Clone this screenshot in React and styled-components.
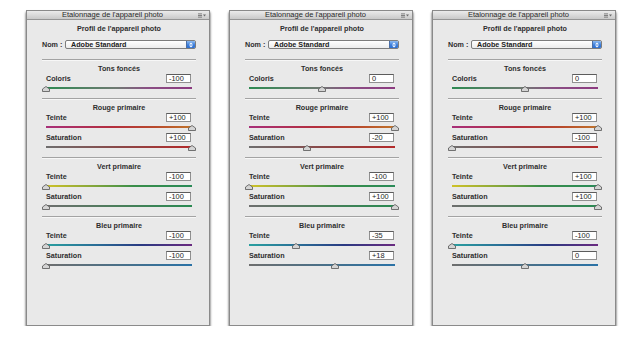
import React from "react";
import styled, { createGlobalStyle } from "styled-components";

const Global = createGlobalStyle`
  html, body { margin: 0; padding: 0; background: #ffffff; }
  body { font-family: "Liberation Sans", Arial, sans-serif; }
`;

const Page = styled.div`
  display: flex;
  gap: 19px;
  padding: 10px 0 0 26px;
`;

const Panel = styled.div`
  width: 184px;
  height: 316px;
  box-sizing: border-box;
  border: 1px solid #8a8a8a;
  background: #e9e9e9;
  box-shadow: 0 2px 2px rgba(0, 0, 0, 0.6), 0 3px 3px rgba(0, 0, 0, 0.25);
  display: flex;
  flex-direction: column;
`;

const TitleBar = styled.div`
  height: 8px;
  border-bottom: 1px solid #959595;
  background: linear-gradient(#ebebeb, #c9c9c9);
  display: flex;
  align-items: center;
`;

const Title = styled.div`
  flex: 1;
  text-align: center;
  font-size: 7.5px;
  line-height: 8px;
  color: #2a2a2a;
  white-space: nowrap;
`;

const MenuIcon = styled.svg`
  width: 8px;
  height: 5px;
  margin-right: 3px;
  flex: none;
`;

const Body = styled.div`
  padding: 4px 13px 0 15px;
  display: flex;
  flex-direction: column;
`;

const Heading = styled.div`
  height: 10px;
  line-height: 10px;
  text-align: center;
  font-size: 7.2px;
  font-weight: bold;
  color: #2e2e2e;
  white-space: nowrap;
  margin-top: ${(p) => (p.$first ? 0 : 3)}px;
`;

const ProfileRow = styled.div`
  display: flex;
  align-items: center;
  height: 9px;
  margin: 6px 0 6px 0;
`;

const NomLabel = styled.div`
  width: 23px;
  font-size: 7.2px;
  font-weight: bold;
  color: #2e2e2e;
  white-space: nowrap;
`;

const Select = styled.div`
  flex: 1;
  height: 9px;
  box-sizing: border-box;
  border: 1px solid #7d7d7d;
  border-radius: 2px;
  background: linear-gradient(#ffffff, #ececec);
  display: flex;
  align-items: center;
  overflow: hidden;
`;

const SelectText = styled.div`
  flex: 1;
  padding-left: 5px;
  font-size: 7.2px;
  font-weight: bold;
  line-height: 7px;
  color: #222;
`;

const Stepper = styled.div`
  width: 8px;
  height: 100%;
  background: linear-gradient(#8fbcf2, #3d7fdc 55%, #2e6fd0);
  border-left: 1px solid #4a6ea6;
  display: flex;
  align-items: center;
  justify-content: center;
`;

const Separator = styled.div`
  height: 1px;
  margin-top: 4px;
  background: #a3a3a3;
  border-bottom: 1px solid #f7f7f7;
`;

const Rows = styled.div`
  padding: 0 4px 0 4px;
  display: flex;
  flex-direction: column;
`;

const LabelRow = styled.div`
  height: 9px;
  display: flex;
  align-items: center;
  justify-content: space-between;
`;

const Label = styled.div`
  font-size: 7.2px;
  font-weight: bold;
  color: #2e2e2e;
`;

const ValueBox = styled.div`
  width: 25px;
  height: 9px;
  box-sizing: border-box;
  border: 1px solid #909090;
  border-top-color: #5c5c5c;
  background: #ffffff;
  font-size: 7.4px;
  line-height: 7px;
  padding-left: 2px;
  color: #1e1e1e;
  margin-right: 1px;
`;

const SliderArea = styled.div`
  position: relative;
  height: 11px;
`;

const Track = styled.div`
  position: absolute;
  left: 0;
  right: 0;
  top: 4px;
  height: 2px;
  background: ${(p) => p.$bg};
`;

const Thumb = styled.svg`
  position: absolute;
  top: 3px;
  width: 8px;
  height: 6px;
  margin-left: -4px;
`;

const gradients = {
  coloris: "linear-gradient(to right, #2e8a52, #6f7a72 48%, #8a4e84 70%, #8c3a80)",
  rougeT: "linear-gradient(to right, #a8307a, #b42e3e 45%, #b84a2c 75%, #c0742c)",
  rougeS: "linear-gradient(to right, #6e6e6e, #8a4848 50%, #b42a2a)",
  vertT: "linear-gradient(to right, #cfc228, #8aa83a 30%, #3a8e4a 60%, #2a8a58)",
  vertS: "linear-gradient(to right, #6e6e6e, #4a7e5a 50%, #2a8a52)",
  bleuT: "linear-gradient(to right, #2aa0a0, #2a6c96 35%, #2a3a82 65%, #6a2a80)",
  bleuS: "linear-gradient(to right, #6e6e6e, #4a7088 50%, #2a72a6)",
};

const fmt = (v) => (v > 0 ? `+${v}` : `${v}`);

function Slider({ label, value, bg }) {
  const pct = ((value + 100) / 200) * 100;
  return (
    <>
      <LabelRow>
        <Label>{label}</Label>
        <ValueBox>{fmt(value)}</ValueBox>
      </LabelRow>
      <SliderArea>
        <Track $bg={bg} />
        <Thumb viewBox="0 0 8 6" style={{ left: `${pct}%` }}>
          <polygon
            points="0.5,3 4,0.5 7.5,3 7.5,5.5 0.5,5.5"
            fill="#d4d4d4"
            stroke="#555555"
            strokeWidth="0.8"
          />
        </Thumb>
      </SliderArea>
    </>
  );
}

function Section({ title, children }) {
  return (
    <>
      <Separator />
      <Heading>{title}</Heading>
      <Rows>{children}</Rows>
    </>
  );
}

function CalibrationPanel({ d }) {
  return (
    <Panel>
      <TitleBar>
        <Title>Etalonnage de l'appareil photo</Title>
        <MenuIcon viewBox="0 0 8 5">
          <rect x="0" y="0.5" width="4" height="0.8" fill="#6a6a6a" />
          <rect x="0" y="2.1" width="4" height="0.8" fill="#6a6a6a" />
          <rect x="0" y="3.7" width="4" height="0.8" fill="#6a6a6a" />
          <polygon points="5,1.5 8,1.5 6.5,3.5" fill="#6a6a6a" />
        </MenuIcon>
      </TitleBar>
      <Body>
        <Heading $first>Profil de l'appareil photo</Heading>
        <ProfileRow>
          <NomLabel>Nom :</NomLabel>
          <Select>
            <SelectText>Adobe Standard</SelectText>
            <Stepper>
              <svg width="4" height="6" viewBox="0 0 4 6">
                <polygon points="0,2.4 2,0.4 4,2.4" fill="#fff" />
                <polygon points="0,3.6 2,5.6 4,3.6" fill="#fff" />
              </svg>
            </Stepper>
          </Select>
        </ProfileRow>
        <Section title="Tons foncés">
          <Slider label="Coloris" value={d.coloris} bg={gradients.coloris} />
        </Section>
        <Section title="Rouge primaire">
          <Slider label="Teinte" value={d.rouge[0]} bg={gradients.rougeT} />
          <Slider label="Saturation" value={d.rouge[1]} bg={gradients.rougeS} />
        </Section>
        <Section title="Vert primaire">
          <Slider label="Teinte" value={d.vert[0]} bg={gradients.vertT} />
          <Slider label="Saturation" value={d.vert[1]} bg={gradients.vertS} />
        </Section>
        <Section title="Bleu primaire">
          <Slider label="Teinte" value={d.bleu[0]} bg={gradients.bleuT} />
          <Slider label="Saturation" value={d.bleu[1]} bg={gradients.bleuS} />
        </Section>
      </Body>
    </Panel>
  );
}

const panels = [
  { coloris: -100, rouge: [100, 100], vert: [-100, -100], bleu: [-100, -100] },
  { coloris: 0, rouge: [100, -20], vert: [-100, 100], bleu: [-35, 18] },
  { coloris: 0, rouge: [100, -100], vert: [100, 100], bleu: [-100, 0] },
];

export default function App() {
  return (
    <>
      <Global />
      <Page>
        {panels.map((d, i) => (
          <CalibrationPanel key={i} d={d} />
        ))}
      </Page>
    </>
  );
}
